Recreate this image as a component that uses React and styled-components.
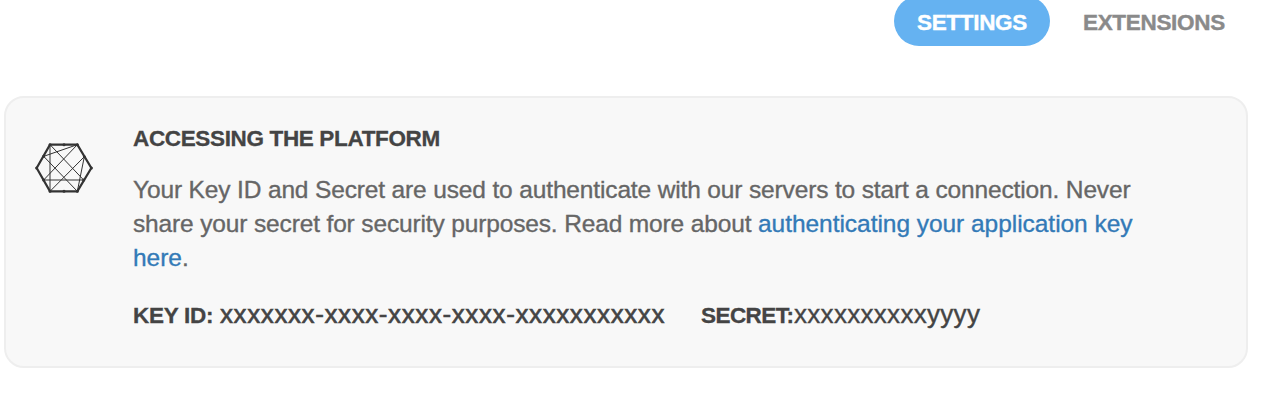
import React from 'react';
import styled, { createGlobalStyle } from 'styled-components';

const GlobalStyle = createGlobalStyle`
  * { box-sizing: border-box; }
  body {
    margin: 0;
    background: #fff;
    font-family: "Liberation Sans", Arial, sans-serif;
    -webkit-font-smoothing: antialiased;
  }
`;

const Page = styled.div`
  height: 404px;
  overflow: hidden;
`;

const Tabs = styled.nav`
  display: flex;
  justify-content: flex-end;
  align-items: flex-start;
  height: 100px;
  margin-top: -4px;
  padding-right: 17px;
`;

const Tab = styled.a`
  height: 50px;
  width: ${(p) => (p.$active ? 156 : 197)}px;
  padding-left: ${(p) => (p.$active ? 23 : 33)}px;
  line-height: 53px;
  font-size: 22.5px;
  letter-spacing: -0.32px;
  font-weight: 700;
  white-space: nowrap;
  color: ${(p) => (p.$active ? '#fff' : '#8a8a8a')};
  background: ${(p) => (p.$active ? '#65b2f1' : 'transparent')};
  border-radius: 25px;
  -webkit-text-stroke: 0.4px currentColor;
`;

const Panel = styled.section`
  display: flex;
  width: 1244px;
  height: 272px;
  margin-left: 4px;
  border: 2px solid #eee;
  border-radius: 20px;
  background: #f8f8f8;
`;

const Mark = styled.svg`
  flex: none;
  width: 80px;
  height: 76px;
  margin: 32px 29px 0 18px;
`;

const Content = styled.div`
  padding-top: 26px;
`;

const Title = styled.h2`
  margin: 0;
  font-size: 22.5px;
  letter-spacing: -0.35px;
  line-height: 30px;
  color: #444;
  -webkit-text-stroke: 0.3px currentColor;
`;

const Copy = styled.p`
  margin: 19px 0 0;
  font-size: 24.5px;
  line-height: 34px;
  color: #666;
  -webkit-text-stroke: 0.35px currentColor;
`;

const Line = styled.span`
  display: block;
  white-space: nowrap;
  letter-spacing: -0.145px;
`;

const Link = styled.a`
  color: #337ab7;
  letter-spacing: -0.04px;
`;

const Keys = styled.div`
  display: flex;
  align-items: baseline;
  margin-top: 22px;
  line-height: 34px;
  color: #444;
  white-space: nowrap;
`;

const Label = styled.strong`
  font-size: 22.5px;
  width: ${(p) => p.$width}px;
  letter-spacing: ${(p) => p.$spacing}px;
  -webkit-text-stroke: 0.3px currentColor;
`;

const Value = styled.span`
  font-size: 26px;
  width: ${(p) => p.$width}px;
  letter-spacing: ${(p) => p.$spacing}px;
  -webkit-text-stroke: ${(p) => p.$weight}px currentColor;
`;

function NetworkMark() {
  return (
    <Mark viewBox="0 0 240 228" fill="none" stroke="#333" aria-hidden="true">
      <path d="M78 44H160L202 114L160 184H78L38 114Z" strokeWidth="6.5" />
      <path d="M78 44V184M78 44L179 150M160 44L59 79M160 44L59 150M59 79L160 184M78 184L181 80M181 80L160 184M59 150H179" strokeWidth="3" />
      <path d="M78 44h.1M120 44h.1M160 44h.1M181 80h.1M202 114h.1M179 150h.1M160 184h.1M120 184h.1M78 184h.1M59 150h.1M38 114h.1M59 79h.1" strokeWidth="9" strokeLinecap="round" />
    </Mark>
  );
}

export default function App() {
  return (
    <Page>
      <GlobalStyle />
      <Tabs>
        <Tab $active>SETTINGS</Tab>
        <Tab>EXTENSIONS</Tab>
      </Tabs>
      <Panel>
        <NetworkMark />
        <Content>
          <Title>ACCESSING THE PLATFORM</Title>
          <Copy>
            <Line>Your Key ID and Secret are used to authenticate with our servers to start a connection. Never</Line>
            <Line>share your secret for security purposes. Read more about <Link>authenticating your application key</Link></Line>
            <Line><Link>here</Link>.</Line>
          </Copy>
          <Keys>
            <Label $width={87} $spacing={-0.25}>KEY ID:</Label>
            <Value $width={481} $spacing={0.6} $weight={0.6}>xxxxxxx-xxxx-xxxx-xxxx-xxxxxxxxxxx</Value>
            <Label $width={93} $spacing={-0.55}>SECRET:</Label>
            <Value $width={200} $spacing={0.3} $weight={0.4}>xxxxxxxxxxyyyy</Value>
          </Keys>
        </Content>
      </Panel>
    </Page>
  );
}
